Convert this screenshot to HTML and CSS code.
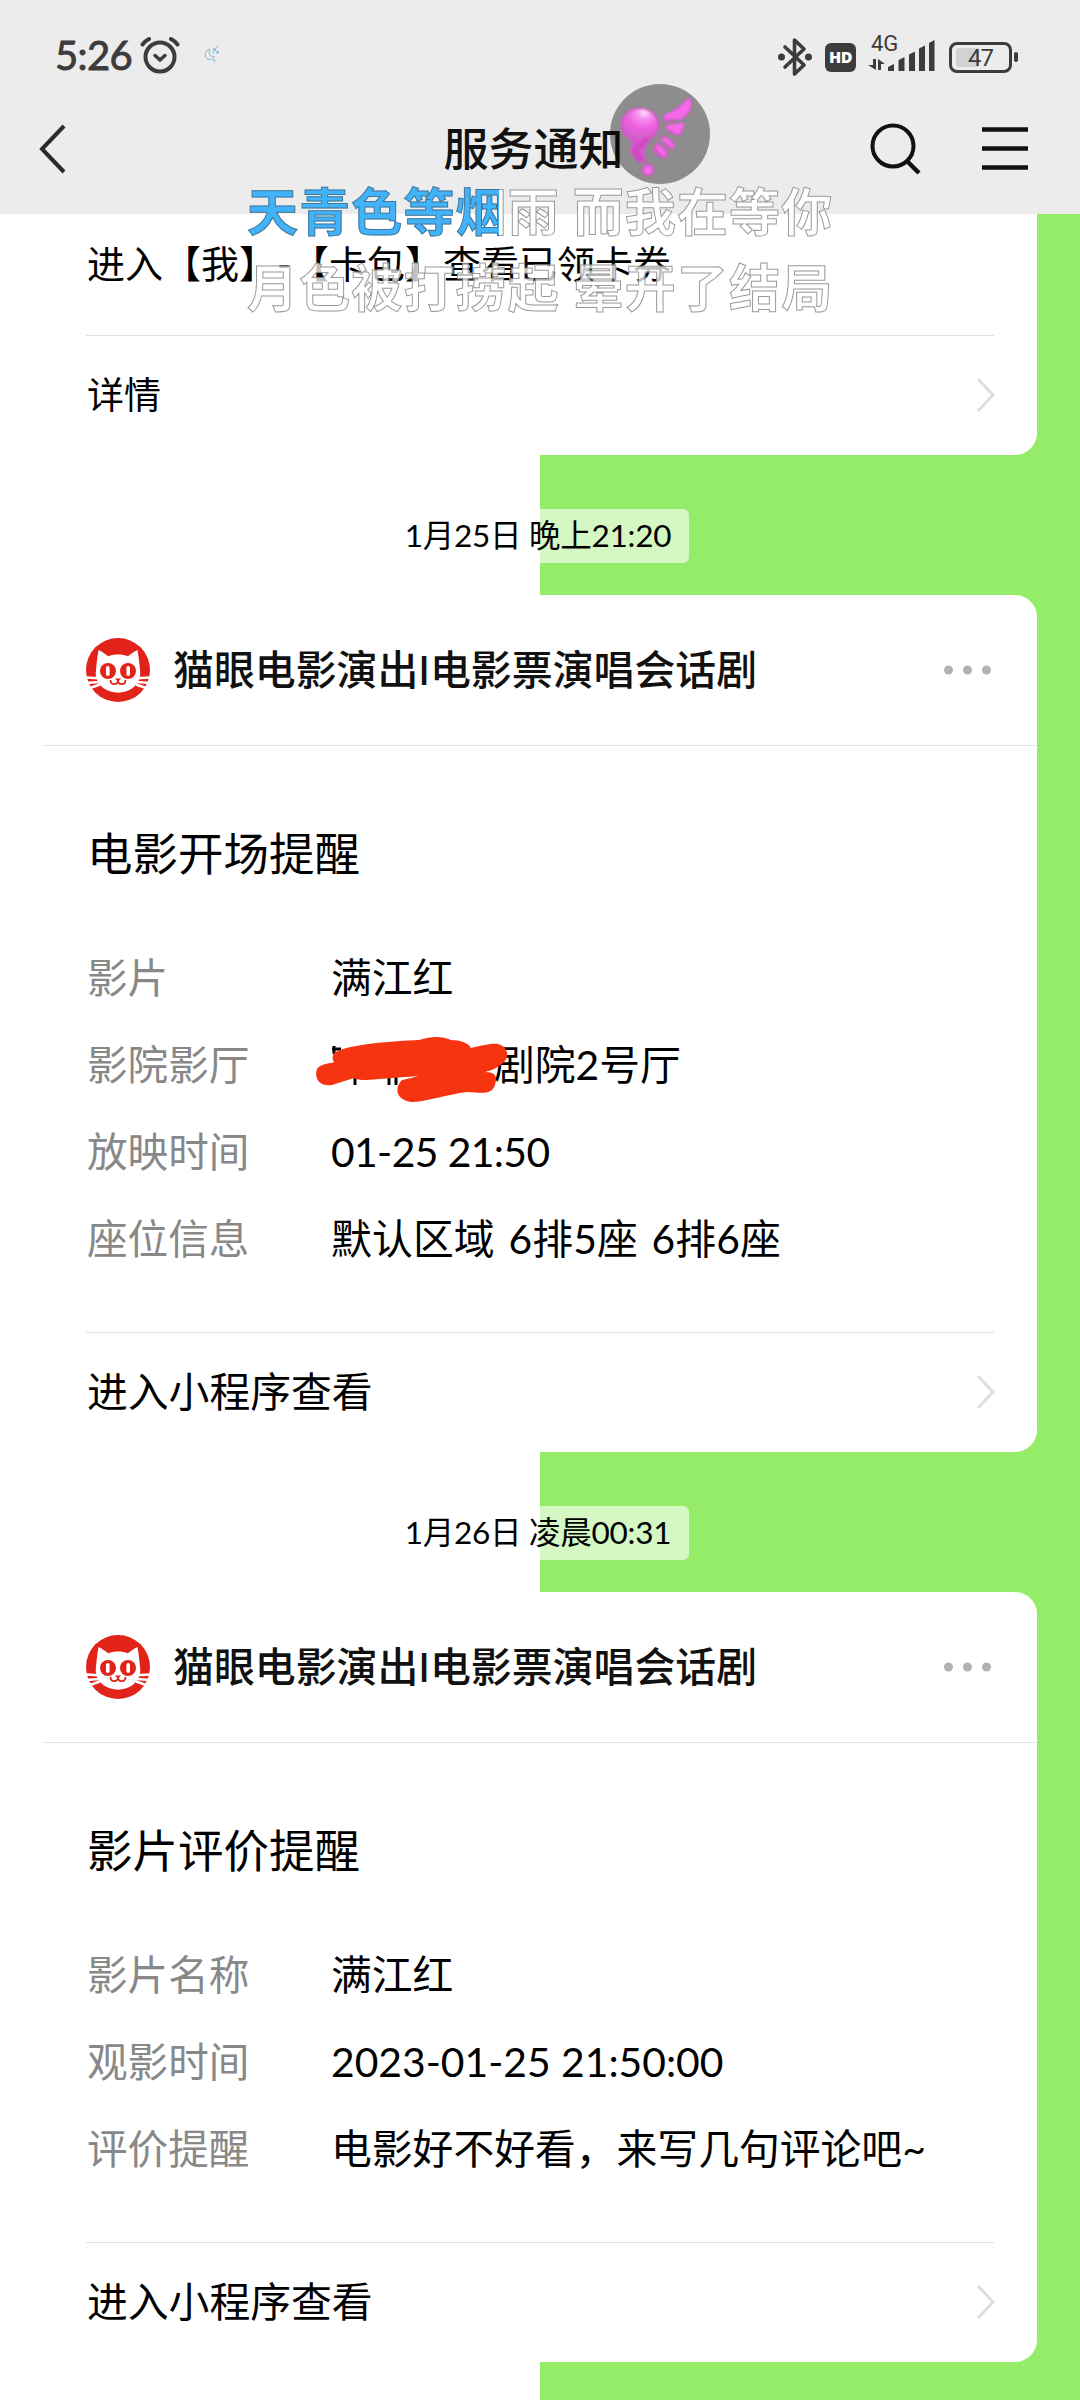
FILE: index.html
```html
<!DOCTYPE html>
<html lang="zh-CN">
<head>
<meta charset="utf-8">
<title>服务通知</title>
<link rel="stylesheet" href="styles.css">
</head>
<body>
<svg class="defs" width="0" height="0">
  <symbol id="cat" viewBox="0 0 64 64">
    <circle cx="32" cy="32" r="32" fill="#e2231a"/>
    <path d="M12.500 12c4 2 7.500 4.500 9.500 6.200 6-2.300 14-2.300 20 0 2-1.700 5.500-4.200 9.500-6.200 1 6 2 13 2.500 20 1.500 8-3 15-8 18.500-8 5.500-20 5.500-28 0-5-3.500-9.500-10.500-8-18.500.5-7 1.500-14 2.500-20z" fill="#fff"/>
    <path d="M0 39.500l13 .8M0 45l13-1M1 51l13-4.500M64 39.500l-13 .8M64 45l-13-1M63 51l-13-4.500" stroke="#fff" stroke-width="2.600"/>
    <ellipse cx="22" cy="33" rx="8" ry="8" fill="#e2231a"/><ellipse cx="42" cy="33" rx="8" ry="8" fill="#e2231a"/>
    <rect x="20" y="28" width="3.600" height="10" rx="1.800" fill="#fff"/><rect x="40.400" y="28" width="3.600" height="10" rx="1.800" fill="#fff"/>
    <path d="M29 40.500h6l-3 3.500z" fill="#e2231a"/>
    <path d="M24.500 42c0 5.500 7.500 5.500 7.500 0 0 5.500 7.500 5.500 7.500 0" fill="none" stroke="#e2231a" stroke-width="1.800"/>
  </symbol>
  <symbol id="chev" viewBox="0 0 20 36"><path d="M2 2l15 16L2 34" fill="none" stroke="#dedede" stroke-width="3"/></symbol>
  <symbol id="dots" viewBox="0 0 50 12"><g fill="#b2b2b2"><circle cx="5.500" cy="6" r="4.500"/><circle cx="24.500" cy="6" r="4.500"/><circle cx="43.500" cy="6" r="4.500"/></g></symbol>
</svg>

<header class="top">
  <div class="status">
    <span class="clock">5:26</span>
    <svg class="alarm" width="40" height="40" viewBox="0 0 40 40" fill="none" stroke="#3c3c3c" stroke-linecap="round"><circle cx="20" cy="22" r="14.500" stroke-width="4"/><path d="M15 20.500l5 4.500 5-4.500" stroke-width="3.500"/><path d="M2.500 9.500Q5 6 9 4M37.500 9.500Q35 6 31 4" stroke-width="4"/></svg>
    <svg class="moon" width="16" height="18" viewBox="0 0 16 18" fill="none" stroke="#74b9e0" stroke-width="1"><path d="M6 3C1 4 0 10 3 12.500c3 2 7 1 7-2C6 11 4 8 6 3zM9 3l2-1 1 2-2 1zM13 5l2 1-2 2zM10 13l1 3M12 1h2M8 7l2-1"/></svg>
    <span class="spacer"></span>
    <svg class="bt" width="36" height="40" viewBox="0 0 36 40"><path d="M8 10l19 18-9.500 9V3l9.500 9L8 30" fill="none" stroke="#3c3c3c" stroke-width="3.600" stroke-linejoin="round" stroke-linecap="round"/><circle cx="4.500" cy="20" r="3.500" fill="#3c3c3c"/><circle cx="31.500" cy="20" r="3.500" fill="#3c3c3c"/></svg>
    <span class="hd">HD</span>
    <span class="net"><span class="gen">4G</span><svg width="68" height="32" viewBox="0 0 68 32" fill="#3c3c3c"><path d="M5 19h3v11L0 25h5zM10 30V19l7 5h-4v6zM20 31v-4l6-3v7zM30.500 31V20l6-3v14zM41 31V14.500l6-3V31zM51 31V8.500l6-3V31zM61 31V3l5.500-3v31z"/></svg></span>
    <span class="batt"><span class="cell"><span class="level"></span><span class="pct">47</span></span><span class="tip"></span></span>
  </div>
  <nav class="nav">
    <svg width="28" height="50" viewBox="0 0 28 50"><path d="M25 2L3 25l22 23" fill="none" stroke="#2b2b2b" stroke-width="4"/></svg>
    <h1 class="title">服务通知</h1>
    <div class="tools">
      <svg width="52" height="52" viewBox="0 0 52 52" fill="none" stroke="#111" stroke-width="4"><circle cx="23" cy="23" r="20.500"/><path d="M37 38l12 12" stroke-width="4.500"/></svg>
      <svg width="46" height="46" viewBox="0 0 46 46"><path d="M0 3.500h46M0 22.500h46M0 41.500h46" stroke="#111" stroke-width="4.500"/></svg>
    </div>
  </nav>
</header>

<main class="chat">
  <section class="card first">
    <p class="line">进入【我】-【卡包】查看已领卡券</p>
    <div class="foot"><span>详情</span><svg class="chev"><use href="#chev"/></svg></div>
  </section>

  <div class="stamp"><span>1月25日 晚上21:20</span></div>

  <section class="card">
    <div class="head"><svg class="avatar"><use href="#cat"/></svg><span class="name">猫眼电影演出I电影票演唱会话剧</span><svg class="dots"><use href="#dots"/></svg></div>
    <div class="body">
      <h2>电影开场提醒</h2>
      <dl>
        <dt>影片</dt><dd>满江红</dd>
        <dt>影院影厅</dt><dd class="masked">剧院2号厅
          <svg class="scribble" width="200" height="70" viewBox="0 0 200 70"><path d="M20 11v8M18 14h9M41 37v13M75 39v11M82 39v11" stroke="#000" stroke-width="3"/><path d="M20 18C34 9 80 6 105 5Q124-1 137 5Q152 5 157 13C170 10 178 8 184 9C195 12 196 23 188 29C181 35 171 37 171 37C183 37 183 43 181 50C177 60 170 58 153 57C135 59 112 67 97 67C82 65 80 53 88 45Q98 43 104 41L53 45Q42 45 40 43L18 50C5 52 0 43 3 34C7 28 16 29 20 27Q17 23 20 18z" fill="#f73410"/></svg></dd>
        <dt>放映时间</dt><dd class="short">01-25 21:50</dd>
        <dt>座位信息</dt><dd class="seats">默认区域 6排5座 6排6座</dd>
      </dl>
    </div>
    <div class="foot"><span>进入小程序查看</span><svg class="chev"><use href="#chev"/></svg></div>
  </section>

  <div class="stamp"><span>1月26日 凌晨00:31</span></div>

  <section class="card">
    <div class="head"><svg class="avatar"><use href="#cat"/></svg><span class="name">猫眼电影演出I电影票演唱会话剧</span><svg class="dots"><use href="#dots"/></svg></div>
    <div class="body">
      <h2>影片评价提醒</h2>
      <dl>
        <dt>影片名称</dt><dd>满江红</dd>
        <dt>观影时间</dt><dd>2023-01-25 21:50:00</dd>
        <dt>评价提醒</dt><dd>电影好不好看，来写几句评论吧~</dd>
      </dl>
    </div>
    <div class="foot"><span>进入小程序查看</span><svg class="chev"><use href="#chev"/></svg></div>
  </section>
</main>

<svg class="floater" width="100" height="100" viewBox="0 0 100 100">
  <defs><radialGradient id="orb" cx=".62" cy=".12" r=".9"><stop offset="0" stop-color="#ffe2fb"/><stop offset=".25" stop-color="#f58cec"/><stop offset=".6" stop-color="#ee5fe0"/><stop offset="1" stop-color="#cf5fc6"/></radialGradient>
  <filter id="soft" x="-20%" y="-20%" width="140%" height="140%"><feGaussianBlur stdDeviation="1.500"/></filter>
  <filter id="edge" x="-20%" y="-20%" width="140%" height="140%"><feGaussianBlur stdDeviation=".8"/></filter></defs>
  <circle cx="50" cy="50" r="50" fill="#000" fill-opacity=".4"/>
  <g filter="url(#soft)" fill="#e24fd6" stroke="#e24fd6" stroke-width="2" stroke-linejoin="round">
    <ellipse cx="30" cy="41" rx="18" ry="16"/>
    <path d="M24 56h14l-5 10 2 12-6-1-8-9z"/>
    <path d="M54 33l14-8 11-10 1 10-8 9-17 3zM56 43l17-3-3 10-8-1zM51 52l11 6 2 6-6-1zM47 59l9 8 1 5-6 1-7-7z"/>
    <circle cx="38" cy="86" r="5"/>
  </g>
  <g filter="url(#edge)">
    <path d="M38 52Q34 60 29 62l-4 5 6 9" fill="none" stroke="#cb4cc0" stroke-width="6" stroke-linejoin="round"/>
    <ellipse cx="30" cy="40" rx="17" ry="15" fill="url(#orb)"/>
    <path d="M56 33l14-7 9-9-1 8-8 8zM59 43l13-2-4 7zM54 55l8 6M48 63l6 7" fill="#f070e4" stroke="#f66aea" stroke-width="4" stroke-linejoin="round" stroke-linecap="round"/>
    <circle cx="38" cy="86" r="4" fill="#f86cec"/>
  </g>
</svg>

<div class="lyrics">
  <p class="now">天青色等烟雨 而我在等你</p>
  <p class="next">月色被打捞起 晕开了结局</p>
</div>
</body>
</html>
```

FILE: styles.css
```css
* { box-sizing: border-box; margin: 0; padding: 0; }
html, body { width: 1080px; height: 2400px; overflow: hidden; }
body {
  position: relative;
  background: linear-gradient(90deg, #fff 540px, #95ec69 540px);
  color: #000;
  font-family: "Lato", "Noto Sans CJK SC", sans-serif;
  font-size: 40.8px;
  line-height: 60px;
}
svg { display: block; flex: none; }
.defs { position: absolute; }

.top { height: 214px; background: #ececec; }
.status { height: 110px; padding: 0 62px 0 55px; display: flex; align-items: center; color: #3c3c3c; }
.clock { font-size: 40px; font-weight: 400; letter-spacing: -.6px; -webkit-text-stroke: .9px #3c3c3c; width: 85px; white-space: nowrap; }
.moon { margin-left: 24px; }
.spacer { flex: 1; }
.hd { width: 31px; height: 29px; margin: 4px 12px 0; border-radius: 6px; background: #3c3c3c; color: #fff; font: 800 16px/29px "Open Sans", sans-serif; letter-spacing: -.5px; text-align: center; }
.bt { margin-top: 3px; }
.net { position: relative; width: 68px; margin: 2px 13px 0 0; }
.gen { position: absolute; left: 3px; top: -9px; font: 22px/26px "Roboto", sans-serif; }
.batt { display: flex; align-items: center; margin-top: 4px; }
.cell { position: relative; width: 63px; height: 31px; border: 3px solid #3c3c3c; border-radius: 8px; padding: 3px 4px; }
.level { display: block; width: 23px; height: 19px; border-radius: 2px; background: #d2d2d2; }
.pct { position: absolute; inset: 0; font: 400 24px/27px "Roboto", sans-serif; letter-spacing: -1px; text-align: center; }
.tip { width: 4px; height: 10px; margin-left: 2px; border-radius: 2px; background: #3c3c3c; }

.nav { height: 78px; padding: 0 52px 0 39px; display: grid; grid-template-columns: 160px 1fr 160px; align-items: center; }
.title { text-align: center; font-size: 45px; font-weight: 500; color: #111; }
.tools { display: flex; justify-content: flex-end; align-items: center; gap: 60px; }

.card { margin: 0 43px; background: #fff; border-radius: 22px; overflow: hidden; }
.card.first { height: 241px; border-radius: 0 0 22px 22px; }
.line { height: 121px; padding: 19px 44px 0; font-size: 38px; white-space: nowrap; }
.foot { height: 120px; margin: 0 43px; border-top: 1.500px solid #e2e2e2; display: flex; align-items: center; justify-content: space-between; padding: 0 0 1px 1px; }
.first .foot { font-size: 37px; }
.chev { width: 20px; height: 36px; margin-right: -2px; }

.stamp { height: 140px; display: flex; align-items: center; justify-content: center; }
.stamp span { height: 54px; margin: 22px 4px 0 0; padding: 0 18px; border-radius: 6px; background: rgba(255, 255, 255, .6); font-size: 31.500px; line-height: 53px; letter-spacing: -.25px; }

.head { height: 151px; border-bottom: 1.500px solid #e2e2e2; display: flex; align-items: center; padding: 0 44px 0 43px; }
.avatar { width: 64px; height: 64px; }
.name { margin-left: 23px; flex: 1; font-size: 40.900px; font-weight: 500; color: #111; white-space: nowrap; }
.dots { width: 50px; height: 12px; }
.body { padding: 78px 44px 49px; }
h2 { font-size: 45.500px; font-weight: 400; margin-bottom: 51px; line-height: 60px; }
dl { display: grid; grid-template-columns: 244px 1fr; grid-auto-rows: 87px; line-height: 86px; white-space: nowrap; }
dt { color: #888; font-size: 40.600px; }
.short { letter-spacing: -.6px; }
.seats { word-spacing: 3px; letter-spacing: .15px; }
.masked { position: relative; padding-left: 163px; }
.scribble { position: absolute; left: -17px; top: 13px; }

.floater { position: absolute; left: 610px; top: 84px; }
.lyrics { position: absolute; left: 247px; top: 171px; font: 700 51px/76px "Noto Sans CJK SC", sans-serif; letter-spacing: 1.150px; white-space: nowrap; }
.lyrics p { color: transparent; -webkit-background-clip: text; background-clip: text; -webkit-text-stroke: 1px rgba(70, 70, 70, .55); }
.now { background-image: linear-gradient(90deg, #41b3fb 252px, rgba(255, 255, 255, .92) 252px); }
.next { background-image: linear-gradient(rgba(255, 255, 255, .75), rgba(255, 255, 255, .75)); }
```
